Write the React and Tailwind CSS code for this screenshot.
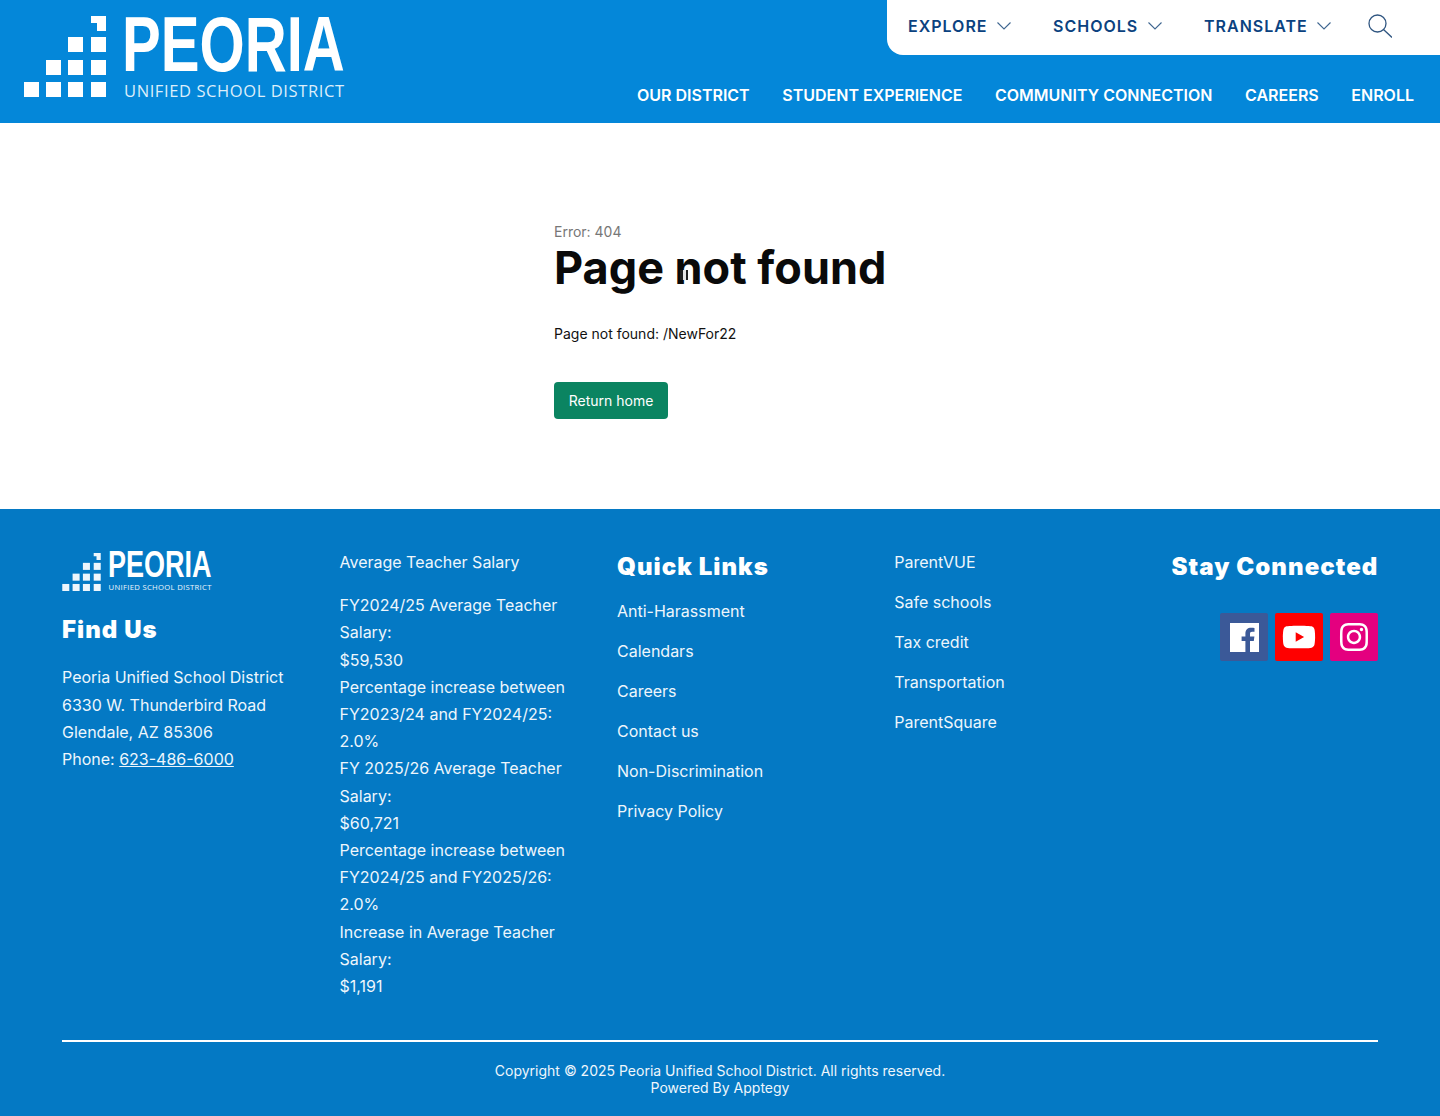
import { FaYoutube, FaInstagram } from "react-icons/fa";

const mainNav = ["Our District", "Student Experience", "Community Connection", "Careers", "Enroll"];
const quickLinks = ["Anti-Harassment", "Calendars", "Careers", "Contact us", "Non-Discrimination", "Privacy Policy"];
const moreLinks = ["ParentVUE", "Safe schools", "Tax credit", "Transportation", "ParentSquare"];
const salaryLines = [
  "FY2024/25 Average Teacher Salary:",
  "$59,530",
  "Percentage increase between FY2023/24 and FY2024/25:",
  "2.0%",
  "FY 2025/26 Average Teacher Salary:",
  "$60,721",
  "Percentage increase between FY2024/25 and FY2025/26:",
  "2.0%",
  "Increase in Average Teacher Salary:",
  "$1,191",
];

function LogoMark({ className }) {
  return (
    <svg viewBox="0 0 82 81" className={className} fill="currentColor">
      <path d="M67 0h15v15H73V7h-6z" />
      <rect x="44" y="21" width="15" height="15" />
      <rect x="67" y="21" width="15" height="15" />
      <rect x="22" y="44" width="15" height="15" />
      <rect x="44" y="44" width="15" height="15" />
      <rect x="67" y="44" width="15" height="15" />
      <rect x="0" y="66" width="15" height="15" />
      <rect x="22" y="66" width="15" height="15" />
      <rect x="44" y="66" width="15" height="15" />
      <rect x="67" y="66" width="15" height="15" />
    </svg>
  );
}

function Chevron() {
  return (
    <svg viewBox="0 0 14 8" className="w-[14px] h-[8px] text-[#3f6690]" fill="none" stroke="currentColor" strokeWidth="1.1">
      <path d="M0.5 0.5 7 7l6.5-6.5" />
    </svg>
  );
}

function SearchIcon() {
  return (
    <svg viewBox="0 0 24 24" className="w-6 h-6 text-[#2f5580]" fill="none" stroke="currentColor" strokeWidth="1.3">
      <circle cx="9.5" cy="9.5" r="8.5" />
      <path d="M15.5 15.5 24 23.5" />
    </svg>
  );
}

function FacebookBox() {
  return (
    <svg viewBox="0 0 29 29" className="w-[29px] h-[29px]">
      <path
        fill="#fff"
        d="M0 0h29v29h-9V18h3.8l.6-4.4H20v-2.7c0-1.3.4-2.1 2.2-2.1h2.3V4.9c-.4-.1-1.8-.2-3.4-.2-3.4 0-5.7 2-5.7 5.8v3.1h-3.8V18h3.8v11H0z"
      />
    </svg>
  );
}

function TopItem({ label, className }) {
  return (
    <div className={`flex items-center gap-[9.5px] ${className}`}>
      <span className="text-base font-semibold tracking-[1px] text-[#0b4280]">{label}</span>
      <Chevron />
    </div>
  );
}

function Header() {
  return (
    <header className="h-[123px] bg-[#0487d9] flex justify-between">
      <div className="flex pl-6 pt-4 text-white">
        <LogoMark className="w-[82px] h-[81px] shrink-0" />
        <div className="ml-[16px] w-[222px]">
          <div className="h-[59px] leading-[57px] text-[78px] font-bold font-['Liberation_Sans',sans-serif] whitespace-nowrap origin-left scale-x-[0.745]">
            PEORIA
          </div>
          <div className="mt-[6px] ml-[2px] text-[16.5px] leading-5 font-['Open_Sans',sans-serif] tracking-[0.6px] whitespace-nowrap text-[#dceefb]">
            UNIFIED SCHOOL DISTRICT
          </div>
        </div>
      </div>
      <div className="w-[553px] flex flex-col items-end">
        <div className="w-full h-[55px] bg-white rounded-bl-2xl flex items-center pl-[21px] pb-[3px]">
          <TopItem label="EXPLORE" className="w-[145px]" />
          <TopItem label="SCHOOLS" className="w-[151px]" />
          <TopItem label="TRANSLATE" className="w-[164px]" />
          <SearchIcon />
        </div>
        <nav className="flex gap-[32.6px] pr-[26px] pt-[30px] whitespace-nowrap">
          {mainNav.map((item) => (
            <a key={item} className="text-base leading-5 font-semibold uppercase text-white">
              {item}
            </a>
          ))}
        </nav>
      </div>
    </header>
  );
}

function NotFound() {
  return (
    <main className="h-[386px] bg-white pl-[554px] pt-[100px]">
      <div className="text-sm leading-[18px] text-[#777]">Error: 404</div>
      <div className="relative w-fit">
        <h1 className="text-[45px] leading-[56px] font-bold text-[#0a0a0a] mt-[-1px]">Page not found</h1>
        <span className="absolute left-[126px] top-[30px] w-[8px] h-[10px] bg-[#e8e8e8] border-l-[3px] border-r-2 border-[#222]" />
      </div>
      <p className="mt-[28px] text-sm leading-5 text-[#111]">Page not found: /NewFor22</p>
      <a className="mt-[38px] w-[114px] h-[37px] rounded-sm bg-[#0b8461] text-white text-sm flex items-center justify-center">
        Return home
      </a>
    </main>
  );
}

function FooterHeading({ children, className }) {
  return <h2 className={`text-2xl font-black tracking-[1.05px] text-white ${className}`}>{children}</h2>;
}

function Footer() {
  return (
    <footer className="h-[607px] bg-[#0479c4] text-white px-[62px] pt-[40px]">
      <div className="h-[491px] grid grid-cols-[277.5px_277.5px_277.25px_277.25px_1fr] text-base leading-[27.2px] text-[#eef6fc]">
        <div className="pr-8">
          <div className="flex items-start">
            <LogoMark className="w-[39px] h-[38px] mt-[4px] shrink-0" />
            <div className="ml-[6.5px] w-[106px]">
              <div className="h-[31px] leading-[31px] text-[36px] font-bold font-['Liberation_Sans',sans-serif] whitespace-nowrap origin-left scale-x-[0.75] text-white">
                PEORIA
              </div>
              <div className="mt-[2px] ml-[1px] text-[7.7px] leading-[10px] font-['Open_Sans',sans-serif] tracking-[0.3px] whitespace-nowrap">
                UNIFIED SCHOOL DISTRICT
              </div>
            </div>
          </div>
          <FooterHeading className="mt-[20px] leading-[36px]">Find Us</FooterHeading>
          <div className="mt-[16.3px]">
            <div>Peoria Unified School District</div>
            <div>6330 W. Thunderbird Road</div>
            <div>Glendale, AZ 85306</div>
            <div>Phone: <a className="underline">623-486-6000</a></div>
          </div>
        </div>
        <div className="pr-8">
          <div>Average Teacher Salary</div>
          <div className="mt-[16px]">
            {salaryLines.map((line, i) => (
              <div key={i}>{line}</div>
            ))}
          </div>
        </div>
        <div className="pr-8">
          <FooterHeading className="leading-[36px]">Quick Links</FooterHeading>
          <ul className="mt-[13px] flex flex-col gap-[12.8px]">
            {quickLinks.map((item) => (
              <li key={item}>{item}</li>
            ))}
          </ul>
        </div>
        <ul className="flex flex-col gap-[12.8px]">
          {moreLinks.map((item) => (
            <li key={item}>{item}</li>
          ))}
        </ul>
        <div className="flex flex-col items-end">
          <FooterHeading className="leading-[36px] whitespace-nowrap">Stay Connected</FooterHeading>
          <div className="mt-[28px] flex gap-[7px]">
            <a className="w-12 h-12 rounded-[2px] bg-[#3b5998] flex items-center justify-center">
              <FacebookBox />
            </a>
            <a className="w-12 h-12 rounded-[2px] bg-[#ff0000] flex items-center justify-center">
              <FaYoutube className="w-[34px] h-[34px] text-white" />
            </a>
            <a className="w-12 h-12 rounded-[2px] bg-[#e4007f] flex items-center justify-center">
              <FaInstagram className="w-[32px] h-[32px] text-white" />
            </a>
          </div>
        </div>
      </div>
      <div className="border-t-2 border-white pt-[20px] text-center text-sm leading-[17px] text-[#eef6fc]">
        <div>Copyright © 2025 Peoria Unified School District. All rights reserved.</div>
        <div>Powered By Apptegy</div>
      </div>
    </footer>
  );
}

export default function App() {
  return (
    <div className="font-['Inter',sans-serif]">
      <Header />
      <NotFound />
      <Footer />
    </div>
  );
}
